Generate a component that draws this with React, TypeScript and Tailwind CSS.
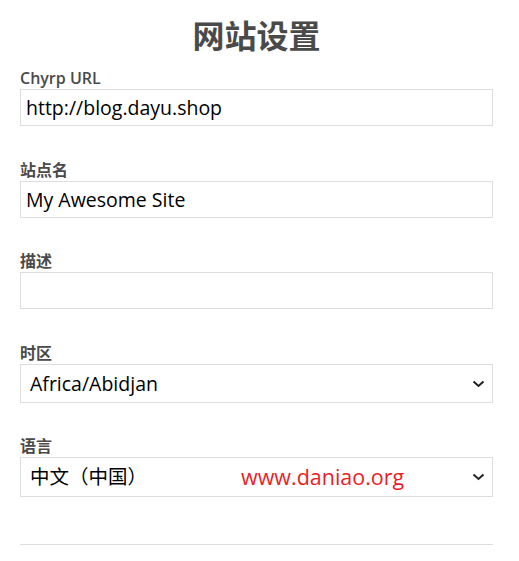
export default function App() {
    const font = { fontFamily: '"Open Sans", "Noto Sans CJK SC", sans-serif' }
    return (
        <div className="w-[519px] h-[561px] bg-white pl-5 pr-[26px]" style={font}>
            <h1 className="pt-[17px] h-[68px] text-center text-[32px] leading-[38px] font-bold text-[#4a4a4a]">网站设置</h1>

            <label className="block text-base leading-5 font-semibold text-[#4a4a4a]">Chyrp URL</label>
            <div className="mt-[1px] h-[37px] border border-[#dddddd] px-[5px] flex items-center text-[19.5px] text-black">http://blog.dayu.shop</div>

            <label className="block mt-[34px] text-base leading-5 font-semibold text-[#4a4a4a]">站点名</label>
            <div className="mt-[1px] h-[37px] border border-[#dddddd] px-[5px] flex items-center text-[19.5px] text-black">My Awesome Site</div>

            <label className="block mt-[33px] text-base leading-5 font-semibold text-[#4a4a4a]">描述</label>
            <div className="mt-[1px] h-[37px] border border-[#dddddd]"></div>

            <label className="block mt-[34px] text-base leading-5 font-semibold text-[#4a4a4a]">时区</label>
            <div className="mt-[1px] h-[39px] border border-[#dddddd] pl-[9px] pr-[7px] flex items-center justify-between text-[19.5px] text-black">
                <span>Africa/Abidjan</span>
                <svg width="13" height="8" viewBox="0 0 13 8" fill="none" stroke="#222" strokeWidth="2"><path d="M1.5 1.5 L6.5 6 L11.5 1.5" /></svg>
            </div>

            <label className="block mt-[33px] text-base leading-5 font-semibold text-[#4a4a4a]">语言</label>
            <div className="mt-[1px] h-[40px] border border-[#dddddd] pl-[9px] pr-[7px] flex items-center text-[19.5px] text-black">
                <span className="w-[211px]">中文（中国）</span>
                <span className="text-[#ee1c25] text-[21.5px]">www.daniao.org</span>
                <svg className="ml-auto" width="13" height="8" viewBox="0 0 13 8" fill="none" stroke="#222" strokeWidth="2"><path d="M1.5 1.5 L6.5 6 L11.5 1.5" /></svg>
            </div>

            <hr className="mt-[47px] border-t border-[#dddddd]" />
        </div>
    )
}
